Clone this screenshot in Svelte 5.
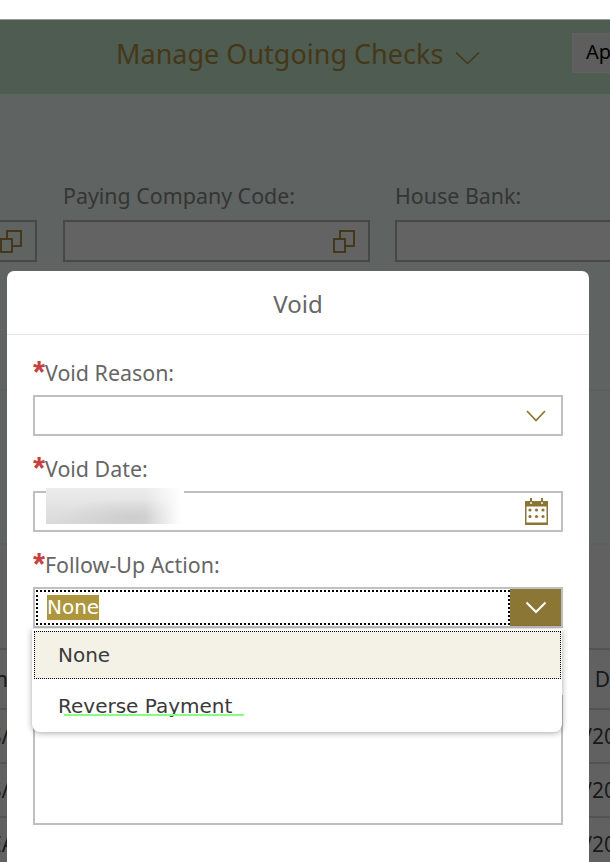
<script>
	const cols = [
		{ label: 'Paying Company Code:', icon: true },
		{ label: 'House Bank:', icon: false }
	];
	const rows = ['S/', 'S/', 'EA'];
</script>

<div class="page">
	<div class="topgap"></div>
	<header class="shellbar">
		<div class="title">
			<span>Manage Outgoing Checks</span>
			<svg class="title-arrow" width="25" height="14" viewBox="0 0 25 14"><path d="M1 1.5 12.5 12.5 24 1.5" /></svg>
		</div>
		<div class="app-btn">Ap</div>
	</header>

	<section class="filters">
		<div class="stub">
			<svg class="copy" width="22" height="23" viewBox="0 0 22 23"><path d="M1 9h11v13H1zM7 9V1h14v15h-9" /></svg>
		</div>
		{#each cols as col}
			<div class="filter">
				<div class="filter-label">{col.label}</div>
				<div class="filter-input">
					{#if col.icon}
						<svg class="copy" width="22" height="23" viewBox="0 0 22 23"><path d="M1 9h11v13H1zM7 9V1h14v15h-9" /></svg>
					{/if}
				</div>
			</div>
		{/each}
	</section>
	<div class="middle"></div>

	<div class="bg-table">
		<div class="bg-head"><span class="cell-l">n</span><span class="cell-r">D</span></div>
		{#each rows as r}
			<div class="bg-row"><span class="cell-l">{r}</span><span class="cell-r">/20</span></div>
		{/each}
	</div>

	<div class="scrim"></div>

	<div class="dialog">
		<h2 class="dialog-title">Void</h2>
		<div class="dialog-body">
			<div class="field">
				<div class="label"><b>*</b>Void Reason:</div>
				<div class="input">
					<svg class="chev" width="20" height="12" viewBox="0 0 20 12"><path d="M1 1 10 10.5 19 1" /></svg>
				</div>
			</div>
			<div class="field">
				<div class="label"><b>*</b>Void Date:</div>
				<div class="input">
					<svg class="cal" width="23" height="27" viewBox="0 0 23 27">
						<rect x="0.75" y="3.75" width="21.5" height="22.5" rx="1" fill="none" stroke="#8b7636" stroke-width="1.5" />
						<rect x="0" y="3" width="23" height="5.5" fill="#8b7636" />
						<rect x="5" y="0" width="2" height="4" fill="#8b7636" />
						<rect x="16" y="0" width="2" height="4" fill="#8b7636" />
						<rect x="5.3" y="4" width="1.4" height="2" fill="#fff" />
						<rect x="16.3" y="4" width="1.4" height="2" fill="#fff" />
						<g fill="#8b7636">
							<circle cx="5" cy="12" r="1.6" /><circle cx="11.5" cy="12" r="1.6" /><circle cx="18" cy="12" r="1.6" />
							<circle cx="5" cy="18.5" r="1.6" /><circle cx="11.5" cy="18.5" r="1.6" /><circle cx="18" cy="18.5" r="1.6" />
						</g>
						<rect x="0" y="24.5" width="23" height="2.5" fill="#8b7636" />
					</svg>
					<div class="redacted"></div>
				</div>
			</div>
			<div class="field">
				<div class="label"><b>*</b>Follow-Up Action:</div>
				<div class="input focused">
					<div class="focus-box"><span class="selected">None</span></div>
					<div class="arrow-btn">
						<svg width="22" height="13" viewBox="0 0 22 13"><path d="M1.5 1.5 11 11 20.5 1.5" /></svg>
					</div>
				</div>
			</div>
			<div class="textarea"></div>
		</div>

		<div class="menu">
			<div class="option active">None</div>
			<div class="option">
				<span>Reverse Payment</span>
				<i class="squiggle"></i>
			</div>
		</div>
	</div>
</div>

<style>
	:global(body) {
		margin: 0;
		background: #fff;
	}

	.page {
		position: relative;
		width: 610px;
		height: 862px;
		overflow: hidden;
		font-family: 'Noto Sans', 'Open Sans', sans-serif;
		background: #fff;
	}

	.topgap {
		height: 19px;
		border-bottom: 1px solid #999;
	}

	.shellbar {
		height: 74px;
		background: #9cb9a4;
		display: flex;
		align-items: center;
		position: relative;
	}
	.title {
		display: flex;
		align-items: center;
		gap: 12px;
		font-size: 27px;
		color: #8b7030;
		margin-left: 116px;
		margin-bottom: 7px;
	}
	.title-arrow {
		margin-top: 9px;
		fill: none;
		stroke: #8b7030;
		stroke-width: 1.6;
	}
	.app-btn {
		position: absolute;
		left: 572px;
		top: 13px;
		width: 60px;
		height: 40px;
		box-sizing: border-box;
		padding: 4px 0 0 13px;
		background: #bdbdbd;
		border: 1px solid #c2c2c2;
		font-size: 20px;
		color: #000;
	}

	.filters {
		height: 297px;
		background: #bec6c3;
		border-bottom: 2px solid #b2c2ba;
		position: relative;
		display: flex;
		gap: 25px;
		padding: 88px 0 0 63px;
		box-sizing: border-box;
	}
	.stub {
		position: absolute;
		left: -20px;
		top: 126px;
		width: 57px;
		height: 42px;
		box-sizing: border-box;
		border: 2px solid #8e8e8e;
		display: flex;
		align-items: center;
		justify-content: flex-end;
		padding-right: 13px;
	}
	.filter {
		flex: none;
		width: 307px;
	}
	.filter-label {
		font-size: 21.4px;
		line-height: 28px;
		color: #6a6a6a;
		margin-bottom: 10px;
	}
	.filter-input {
		height: 42px;
		box-sizing: border-box;
		border: 2px solid #8e8e8e;
		background: #c6c6c6;
		display: flex;
		align-items: center;
		justify-content: flex-end;
		padding-right: 13px;
	}
	.copy {
		fill: none;
		stroke: #8b7030;
		stroke-width: 2;
	}

	.middle {
		height: 154px;
		box-sizing: border-box;
		background: #bec6c3;
		border-bottom: 2px solid #b2c2ba;
	}

	.bg-table {
		background: #c3c3c3;
		padding-top: 103px;
		font-size: 21px;
		color: #333;
		height: 317px;
		box-sizing: border-box;
	}
	.bg-head,
	.bg-row {
		height: 54px;
		border-top: 2px solid #a8a8a8;
		box-sizing: border-box;
		display: flex;
		align-items: center;
		justify-content: space-between;
	}
	.bg-head {
		height: 60px;
	}
	.cell-l {
		margin-left: -10px;
	}
	.cell-r {
		margin-right: -6px;
	}
	.bg-head .cell-l {
		margin-left: -5px;
	}
	.bg-head .cell-r {
		margin-right: 0;
	}

	.scrim {
		position: absolute;
		left: 0;
		top: 20px;
		right: 0;
		bottom: 0;
		background: rgba(0, 0, 0, 0.5);
	}

	.dialog {
		position: absolute;
		left: 7px;
		top: 271px;
		width: 582px;
		height: 591px;
		background: #fff;
		border-radius: 7px 7px 0 0;
	}
	.dialog-title {
		margin: 0;
		height: 63px;
		border-bottom: 1px solid #e5e5e5;
		text-align: center;
		font-weight: 400;
		font-size: 24px;
		line-height: 66px;
		color: #666;
	}
	.dialog-body {
		padding: 23px 26px 0;
	}
	.field {
		margin-bottom: 18px;
	}
	.label {
		display: flex;
		font-size: 21.4px;
		line-height: 30px;
		color: #666;
		margin-bottom: 7px;
		height: 30px;
	}
	.label b {
		flex: none;
		width: 12px;
		color: #c8403f;
		font-family: 'Liberation Sans', sans-serif;
		font-size: 31px;
		font-weight: 700;
		line-height: 30px;
		overflow: hidden;
	}
	.input {
		height: 41px;
		box-sizing: border-box;
		border: 2px solid #bfbfbf;
		width: 530px;
		display: flex;
		align-items: center;
		justify-content: flex-end;
		position: relative;
	}
	.chev {
		margin-right: 15px;
		fill: none;
		stroke: #8b7636;
		stroke-width: 1.8;
	}
	.cal {
		margin-right: 13px;
	}
	.redacted {
		position: absolute;
		left: 11px;
		top: -5px;
		width: 138px;
		height: 36px;
		background:
			linear-gradient(90deg, rgba(255, 255, 255, 0) 72%, #fff 98%),
			radial-gradient(ellipse 55% 55% at 62% 85%, #cdcdcd 0%, rgba(205, 205, 205, 0) 100%),
			linear-gradient(180deg, #ececec, #dadada);
	}
	.input.focused {
		justify-content: flex-start;
		align-items: stretch;
	}
	.focus-box {
		flex: 1;
		border: 2px dotted #000;
		margin: 1px 0 1px 1px;
		display: flex;
		align-items: center;
		padding-left: 9px;
	}
	.selected {
		background: #ae963e;
		color: #fff;
		font-size: 20px;
		line-height: 25px;
		font-family: 'DejaVu Sans', sans-serif;
	}
	.arrow-btn {
		width: 51px;
		background: #8b7636;
		display: flex;
		align-items: center;
		justify-content: center;
	}
	.arrow-btn svg {
		fill: none;
		stroke: #fff;
		stroke-width: 2;
	}
	.textarea {
		width: 530px;
		height: 130px;
		box-sizing: border-box;
		border: 2px solid #bfbfbf;
		margin-top: 67px;
	}

	.menu {
		position: absolute;
		left: 25px;
		top: 358px;
		width: 530px;
		height: 103px;
		background: #fff;
		border-radius: 0 0 8px 8px;
		box-shadow: 0 1px 6px rgba(0, 0, 0, 0.35);
		font-family: 'DejaVu Sans', sans-serif;
		font-size: 20px;
		color: #3a3a3a;
	}
	.option {
		height: 53px;
		box-sizing: border-box;
		padding-left: 26px;
		line-height: 54px;
		position: relative;
	}
	.option.active {
		background: #f4f2e7;
		border: 1px dotted #000;
		margin: 2px 1px 0 2px;
		height: 48px;
		padding-left: 23px;
		line-height: 46px;
	}
	.squiggle {
		position: absolute;
		left: 32px;
		top: 35px;
		width: 180px;
		height: 2px;
		background: #84ff84;
	}
</style>
